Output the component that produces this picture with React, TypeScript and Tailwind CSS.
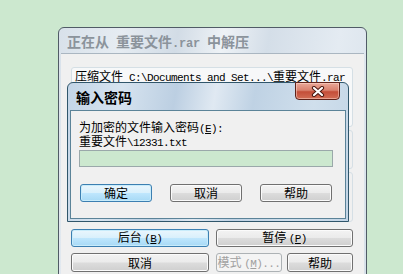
import React from "react";

const monoSm = "font-['Liberation_Mono',monospace] text-[11px] leading-[12px] tracking-[-0.6px]";
const monoLg = "font-['Liberation_Mono',monospace] text-[12px] leading-[14px] tracking-[-0.2px]";

const outerFrame =
  "bg-[linear-gradient(100deg,#d8e1ea_0%,#e6ecf2_18%,#d2dce6_34%,#eef2f6_47%,#d4dee8_60%,#e4ebf2_80%,#d6e0e9_100%)]";
const dialogFrame =
  "bg-[linear-gradient(100deg,#c3d5e7_0%,#d6e3ef_18%,#bccfe2_36%,#e0e9f2_49%,#bfd2e4_62%,#d0dfec_82%,#c2d5e6_100%)]";

const btnBase = "flex items-center justify-center rounded-[3px] whitespace-pre";
const btnNormal =
  "border border-[#707070] bg-[linear-gradient(#f3f3f3_0%,#ebebeb_48%,#dcdcdc_52%,#cfcfcf_100%)] shadow-[inset_0_0_0_1px_#fbfbfb]";
const btnDefault =
  "border border-[#3c7fb1] bg-[linear-gradient(#eaf6fd_0%,#d9f0fc_48%,#bee6fd_52%,#a7d9f5_100%)] shadow-[inset_0_0_0_1px_#c8ecfb]";
const btnDisabled = "border border-[#adb2b5] bg-[#f4f4f4] text-[#a0a0a0]";

// splits text into CJK (full width) and latin (half width, mono) runs
function Mixed({ text, big }: { text: string; big?: boolean }) {
  const parts = text.match(/[\x00-\xff]+|[^\x00-\xff]+/g) ?? [];
  return (
    <span>
      {parts.map((p, i) =>
        /[\x00-\xff]/.test(p[0]) ? (
          <span key={i} className={big ? monoLg : monoSm}>
            {p}
          </span>
        ) : (
          <span key={i}>{p}</span>
        )
      )}
    </span>
  );
}

function Key({ k, after = "" }: { k: string; after?: string }) {
  return (
    <span className={monoSm}>
      (<span className="underline underline-offset-[1px]">{k}</span>){after}
    </span>
  );
}

function Btn({
  children,
  kind = "normal",
  className = "",
}: {
  children: React.ReactNode;
  kind?: "normal" | "default" | "disabled";
  className?: string;
}) {
  const k = kind === "default" ? btnDefault : kind === "disabled" ? btnDisabled : btnNormal;
  return (
    <div className={`${btnBase} ${k} ${className}`}>
      <span className="leading-[12px]">{children}</span>
    </div>
  );
}

function CloseButton() {
  return (
    <div className="absolute -top-px right-[8px] w-[45px] h-[18px] rounded-b-[4px] border border-[#5e2219] bg-[linear-gradient(#eaa898_0%,#d9826f_45%,#c44e39_55%,#d26d55_100%)] flex items-center justify-center shadow-[inset_0_0_0_1px_rgba(255,220,210,0.5)]">
      <svg width="14" height="11" viewBox="0 0 14 11">
        <path d="M3 2 L11 9 M11 2 L3 9" stroke="#4a1810" strokeWidth="4.2" strokeLinecap="round" />
        <path d="M3 2 L11 9 M11 2 L3 9" stroke="#ffffff" strokeWidth="2.2" strokeLinecap="round" />
      </svg>
    </div>
  );
}

export default function App() {
  return (
    <div className="relative w-[403px] h-[274px] overflow-hidden bg-[#cce8cf] pl-[58px] pt-[27px] font-['Noto_Sans_CJK_SC',sans-serif] text-[12px] leading-[12px] text-black">
      {/* extract progress window (inactive) */}
      <div className={`w-[309px] h-[262px] rounded-t-[6px] border border-[#505b66] px-[2px] flex flex-col ${outerFrame}`}>
        <div className="h-[25px] flex items-center pl-[6px] pt-[3px] text-[14px] leading-[14px] font-bold text-[#8b939b] whitespace-pre">
          <Mixed text="正在从 重要文件.rar 中解压" big />
        </div>
        <div className="flex-1 border-t border-[#aab6c1] bg-[#f0f0f0] pl-[10px] pr-[11px] pt-[13px] flex flex-col">
          <div className="h-[60px] rounded-[3px] border border-[#d5dfe5] bg-[#f7f8f9] pl-[3px] pt-[2px] whitespace-pre">
            <span className="underline underline-offset-[1px]">压缩文件</span>
            <Mixed text=" C:\Documents and Set...\重要文件.rar" />
          </div>
          <div className="mt-[3px] h-[39px] rounded-[3px] border border-[#d5dfe5]" />
          <div className="mt-[3px] h-[50px] rounded-[3px] border border-[#d5dfe5]" />
          <div className="mt-[7px] flex gap-[7px]">
            <Btn kind="default" className="w-[138px] h-[18px]">
              后台 <Key k="B" />
            </Btn>
            <Btn className="w-[137px] h-[18px]">
              暂停 <Key k="P" />
            </Btn>
          </div>
          <div className="mt-[6px] flex">
            <Btn className="w-[138px] h-[19px]">取消</Btn>
            <Btn kind="disabled" className="ml-[7px] w-[66px] h-[19px]">
              模式 <Key k="M" after="..." />
            </Btn>
            <Btn className="ml-[5px] w-[66px] h-[19px]">帮助</Btn>
          </div>
        </div>
      </div>

      {/* password dialog (active) */}
      <div className={`absolute left-[67px] top-[82px] w-[282px] h-[140px] rounded-t-[6px] border border-[#30566b] px-[2px] pb-[2px] flex flex-col ${dialogFrame}`}>
        <CloseButton />
        <div className="h-[27px] flex items-center pl-[6px] text-[14px] leading-[14px] font-bold">
          输入密码
        </div>
        <div className="flex-1 border border-[#5b8398] bg-[#f0f0f0] pl-[8px] pt-[9px] flex flex-col">
          <div className="h-[14px] leading-[14px] whitespace-pre">
            为加密的文件输入密码
            <Key k="E" after=":" />
          </div>
          <div className="h-[14px] leading-[14px] whitespace-pre">
            <Mixed text="重要文件\12331.txt" />
          </div>
          <div className="mt-[2px] w-[254px] h-[17px] border border-[#9aa8aa] bg-[#cce8cf]" />
          <div className="mt-[17px] ml-[1px] flex gap-[18px]">
            <Btn kind="default" className="w-[72px] h-[18px]">确定</Btn>
            <Btn className="w-[72px] h-[18px]">取消</Btn>
            <Btn className="w-[72px] h-[18px]">帮助</Btn>
          </div>
        </div>
      </div>
    </div>
  );
}
